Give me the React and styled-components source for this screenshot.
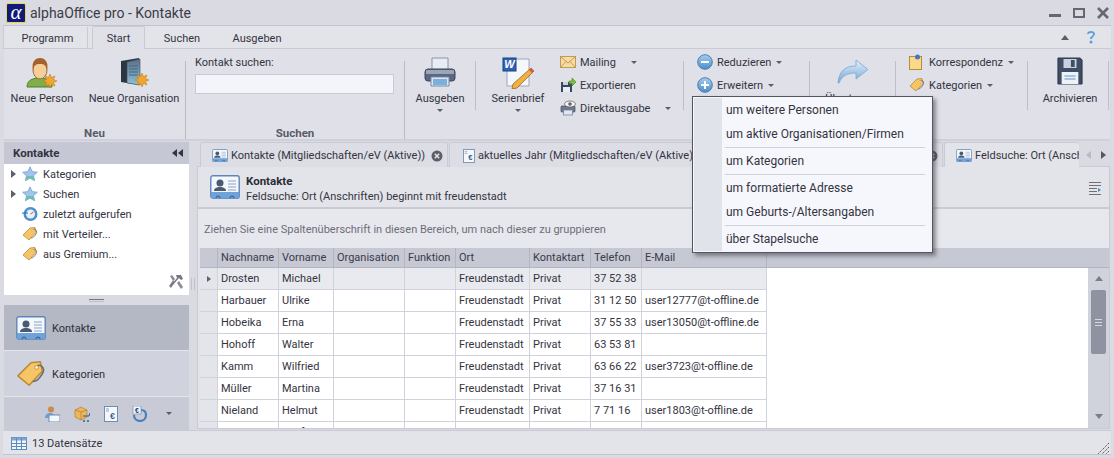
import React from 'react';
import styled, { createGlobalStyle } from 'styled-components';

const GlobalStyle = createGlobalStyle`
  html, body { margin: 0; padding: 0; background: #d9dae2; }
  body { font-family: Roboto, "Noto Sans", sans-serif; font-size: 11px; color: #34343f; }
`;

const Window = styled.div`
  position: relative;
  width: 1114px;
  height: 458px;
  overflow: hidden;
  display: flex;
  flex-direction: column;
  background: #d9dae2;
  box-sizing: border-box;
`;

/* title bar */
const TitleBar = styled.div`
  height: 25px;
  display: flex;
  align-items: center;
  padding: 0 5px 0 6px;
  flex: none;
`;
const Logo = styled.div`
  width: 20px;
  height: 20px;
  background: #101a78;
  border-radius: 2px;
  border: 1px solid #e6d94a;
  box-sizing: border-box;
  color: #fff;
  font: italic 21px/17px "Liberation Serif", serif;
  text-align: center;
  margin-right: 4px;
`;
const Title = styled.div`
  font-size: 14px;
  color: #3c3c46;
  flex: 1;
`;
const WinButtons = styled.div`
  display: flex;
  gap: 12px;
  align-items: center;
`;

/* ribbon tabs */
const TabStrip = styled.div`
  height: 24px;
  flex: none;
  margin: 0 3px;
  background: #e3e4ea;
  border-top: 1px solid #c3c4cf;
  border-bottom: 1px solid #c9cad4;
  border-left: 1px solid #c9cad4;
  display: flex;
  align-items: flex-end;
  box-sizing: border-box;
`;
const RibbonTab = styled.div`
  height: ${p => (p.$active ? '23px' : '22px')};
  width: ${p => p.$w}px;
  display: flex;
  align-items: center;
  justify-content: center;
  box-sizing: border-box;
  margin-bottom: -1px;
  ${p => p.$active && `
    background: #dfe0e8;
    border: 1px solid #c9cad4;
    border-bottom: none;
    border-radius: 2px 2px 0 0;
    margin-left: 4px;
  `}
  ${p => p.$sep && `
    border-right: 1px solid #c9cad4;
    padding-left: 4px;
  `}
`;
const StripEnd = styled.div`
  flex: 1;
  display: flex;
  justify-content: flex-end;
  align-items: center;
  gap: 17px;
  height: 22px;
  padding-right: 15px;
`;

/* ribbon body */
const Ribbon = styled.div`
  height: 92px;
  flex: none;
  margin: 0 4px;
  background: #dfe0e8;
  display: flex;
  border-bottom: 2px solid #cfd0da;
  box-sizing: border-box;
`;
const Group = styled.div`
  width: ${p => p.$w}px;
  flex: ${p => (p.$grow ? 1 : 'none')};
  display: flex;
  flex-direction: column;
  box-sizing: border-box;
  border-right: ${p => (p.$sep ? '1px solid #b9bac4' : 'none')};
  margin-top: 12px;
`;
const GroupBody = styled.div`
  flex: 1;
  display: flex;
  margin-top: -12px;
`;
const GroupLabel = styled.div`
  height: 16px;
  flex: none;
  text-align: center;
  font-weight: 700;
  font-size: 11.5px;
  line-height: 20px;
  color: #5a5b68;
`;
const LargeButton = styled.div`
  width: ${p => p.$w}px;
  margin-left: ${p => p.$ml || 0}px;
  flex: none;
  display: flex;
  flex-direction: column;
  align-items: center;
  padding-top: 5px;
  white-space: nowrap;
`;
const LargeIcon = styled.div`
  height: 32px;
  width: 32px;
  margin-top: 3px;
  display: flex;
  justify-content: center;
`;
const LargeLabel = styled.div`
  line-height: 16px;
  margin-top: 2px;
`;
const Caret = styled.span`
  width: 0;
  height: 0;
  display: inline-block;
  border-left: 3px solid transparent;
  border-right: 3px solid transparent;
  border-top: 3px solid #5c5c68;
  margin-left: ${p => p.$ml || 0}px;
  flex: none;
`;
const LargeCaret = styled(Caret)`
  margin-top: 2px;
`;
const InnerSep = styled.div`
  width: 1px;
  height: 49px;
  margin-top: 12px;
  background: #bdbec8;
  flex: none;
  margin-left: ${p => p.$ml || 0}px;
`;
const SmallColumn = styled.div`
  width: ${p => p.$w}px;
  margin-left: ${p => p.$ml || 0}px;
  flex: none;
  display: flex;
  flex-direction: column;
  padding-top: 2px;
`;
const SmallItem = styled.div`
  height: 23px;
  display: flex;
  align-items: center;
  white-space: nowrap;
  svg { flex: none; margin-right: 4px; margin-top: -1px; }
`;
const SearchBox = styled.div`
  margin-left: 9px;
  width: 199px;
  padding-top: 6px;
  line-height: 15px;
`;
const SearchInput = styled.div`
  height: 20px;
  margin-top: 4px;
  background: #f4f5fb;
  border: 1px solid #c9cad4;
  box-sizing: border-box;
`;

/* main area */
const Main = styled.div`
  flex: 1;
  min-height: 0;
  display: flex;
  margin: 0 4px;
  overflow: hidden;
`;
const Sidebar = styled.div`
  width: 185px;
  flex: none;
  display: flex;
  flex-direction: column;
`;
const SideHeader = styled.div`
  height: 22px;
  margin-top: 1px;
  flex: none;
  background: #c5c8d4;
  font-weight: 700;
  font-size: 11.5px;
  color: #34343f;
  display: flex;
  align-items: center;
  justify-content: space-between;
  padding: 0 6px 0 9px;
`;
const Tree = styled.div`
  height: 131px;
  flex: none;
  background: #fff;
  position: relative;
`;
const TreeRow = styled.div`
  height: 20px;
  display: flex;
  align-items: center;
  padding-left: 7px;
  svg { flex: none; }
`;
const TreeArrow = styled.span`
  width: 0;
  height: 0;
  border-top: 4px solid transparent;
  border-bottom: 4px solid transparent;
  border-left: 5px solid ${p => (p.$hidden ? 'transparent' : '#5f6068')};
  margin-right: 6px;
  flex: none;
`;
const TreeLabel = styled.span`
  margin-left: 5px;
`;
const ToolsCorner = styled.div`
  position: absolute;
  right: 5px;
  bottom: 5px;
  height: 16px;
`;
const SideSplitter = styled.div`
  height: 10px;
  flex: none;
  display: flex;
  justify-content: center;
  padding-top: 4px;
  box-sizing: border-box;
  &::after {
    content: '';
    width: 15px;
    height: 1px;
    border-top: 1px solid #77787f;
    border-bottom: 1px solid #c0c1ca;
  }
`;
const NavButton = styled.div`
  height: ${p => p.$h}px;
  flex: none;
  display: flex;
  align-items: center;
  background: ${p => (p.$active ? '#b3b8c4' : '#d0d3dd')};
  border-bottom: 1px solid #e5e6ec;
  padding-left: 12px;
  box-sizing: border-box;
  span { margin: 2px 0 0 6px; color: #2e2f3a; }
`;
const NavFooter = styled.div`
  flex: 1;
  background: #c8cbd6;
  display: flex;
  align-items: center;
  padding-left: 40px;
  gap: 14px;
`;
const MainSplitter = styled.div`
  width: 8px;
  flex: none;
  display: flex;
  align-items: center;
  justify-content: center;
  &::after {
    content: '';
    width: 2px;
    height: 12px;
    margin-bottom: 4px;
    border-left: 1px solid #c0c1ca;
    border-right: 1px solid #c0c1ca;
  }
`;
const Content = styled.div`
  flex: 1;
  min-width: 0;
  display: flex;
  flex-direction: column;
`;
const DocTabs = styled.div`
  height: 26px;
  flex: none;
  display: flex;
  align-items: flex-end;
  padding-left: 3px;
  position: relative;
  z-index: 1;
  margin-bottom: -1px;
`;
const DocTab = styled.div`
  width: ${p => p.$w}px;
  height: 25px;
  flex: none;
  box-sizing: border-box;
  margin-right: 1px;
  display: flex;
  align-items: center;
  padding: 1px ${p => (p.$clip ? 0 : 2)}px 0 ${p => p.$pl || 11}px;
  border: 1px solid #c9cad4;
  border-bottom: ${p => (p.$clip ? '1px solid #e3e4ea' : 'none')};
  border-right: ${p => (p.$clip ? 'none' : '1px solid #c9cad4')};
  border-radius: 2px 2px 0 0;
  background: ${p => (p.$active ? '#e3e4ea' : '#dcdde5')};
  white-space: nowrap;
  overflow: hidden;
  svg { flex: none; }
  span { margin-left: 3px; }
`;
const DocClose = styled.div`
  margin-left: auto;
  margin-right: 2px;
  display: flex;
`;
const TabArrows = styled.div`
  flex: 1;
  display: flex;
  justify-content: space-between;
  align-items: center;
  height: 25px;
  padding: 0 4px 0 6px;
`;
const TabArrow = styled.span`
  width: 0;
  height: 0;
  border-top: 4px solid transparent;
  border-bottom: 4px solid transparent;
  ${p => (p.$left ? 'border-right: 5px solid #b9bac4;' : 'border-left: 5px solid #55565f;')}
`;
const Panel = styled.div`
  flex: 1;
  min-height: 0;
  background: #e3e4ea;
  border: 1px solid #c9cad4;
  margin-bottom: 1px;
  display: flex;
  flex-direction: column;
`;
const CardHeader = styled.div`
  height: 40px;
  flex: none;
  display: flex;
  align-items: center;
  padding: 0 8px 0 12px;
  border-bottom: 2px solid #c9cad4;
`;
const CardText = styled.div`
  margin-left: 6px;
  padding-top: 3px;
  flex: 1;
  line-height: 16px;
  strong { display: block; font-weight: 700; font-size: 11.5px; color: #2c2c36; }
`;
const PanelMenuWrap = styled.div`
  display: flex;
  margin-top: 3px;
`;
const GroupHint = styled.div`
  height: 39px;
  flex: none;
  display: flex;
  align-items: center;
  padding: 1px 0 0 6px;
  box-sizing: border-box;
  color: #6d6d7b;
  background: #e7e8ed;
`;
const HeaderRow = styled.div`
  height: 19px;
  flex: none;
  background: #c6c8d4;
  border-bottom: 1px solid #b2b4c0;
  display: grid;
  grid-template-columns: 18px 61px 55px 71px 51px 74px 61px 51px 125px;
  margin-left: 2px;
`;
const HeadCell = styled.div`
  border-right: 1px solid #b3b5c2;
  padding-left: 3px;
  line-height: 19px;
  white-space: nowrap;
  overflow: hidden;
  color: #3a3a48;
`;
const GridBody = styled.div`
  flex: 1;
  min-height: 0;
  display: flex;
  overflow: hidden;
  margin-left: 2px;
  background: #fff;
`;
const Rows = styled.div`
  width: 567px;
  flex: none;
`;
const DataRow = styled.div`
  height: 22px;
  display: grid;
  grid-template-columns: 18px 61px 55px 71px 51px 74px 61px 51px 125px;
  box-sizing: border-box;
  border-bottom: 1px solid #d0d2dc;
  background: ${p => (p.$selected ? '#e9eaf0' : '#fff')};
`;
const Indicator = styled.div`
  background: #e4e5eb;
  border-right: 1px solid #d0d2dc;
  display: flex;
  align-items: center;
  justify-content: center;
`;
const RowArrow = styled.span`
  width: 0;
  height: 0;
  border-top: 3px solid transparent;
  border-bottom: 3px solid transparent;
  border-left: 4px solid #5f6068;
`;
const Cell = styled.div`
  border-right: 1px solid #d0d2dc;
  padding-left: 3px;
  line-height: 22px;
  white-space: nowrap;
  overflow: hidden;
  color: #34343f;
`;
const Blank = styled.div`
  flex: 1;
`;
const ScrollBar = styled.div`
  width: 21px;
  flex: none;
  background: #d0d2dc;
  display: flex;
  flex-direction: column;
  align-items: center;
  padding-top: 8px;
`;
const ScrollUp = styled.span`
  width: 0;
  height: 0;
  border-left: 4px solid transparent;
  border-right: 4px solid transparent;
  border-bottom: 5px solid #7b7c8a;
`;
const ScrollDown = styled.span`
  width: 0;
  height: 0;
  border-left: 4px solid transparent;
  border-right: 4px solid transparent;
  border-top: 5px solid #7b7c8a;
  margin-top: auto;
  margin-bottom: 9px;
`;
const Thumb = styled.div`
  width: 15px;
  height: 64px;
  margin-top: 9px;
  background: #8f92a0;
  border-radius: 2px;
  display: flex;
  align-items: center;
  justify-content: center;
  &::after {
    content: '';
    width: 7px;
    height: 5px;
    border-top: 1px solid #d8d9e0;
    border-bottom: 1px solid #d8d9e0;
    background: linear-gradient(#8f92a0 2px, #d8d9e0 2px, #d8d9e0 3px, #8f92a0 3px);
  }
`;

/* status bar */
const StatusBar = styled.div`
  height: 25px;
  flex: none;
  margin: 0 3px 3px;
  background: #e3e4ea;
  border-top: 1px solid #c9cad4;
  border-bottom: 1px solid #c3c4cf;
  box-sizing: border-box;
  display: flex;
  align-items: center;
  padding: 2px 2px 0 8px;
  span { margin-left: 5px; }
`;
const Grip = styled.div`
  margin-left: auto;
  align-self: flex-end;
  display: flex;
`;

/* dropdown */
const Menu = styled.div`
  position: absolute;
  left: 692px;
  top: 96px;
  width: 241px;
  height: 157px;
  box-sizing: border-box;
  background: #f6f7fc;
  border: 1px solid #54555f;
  box-shadow: 3px 3px 4px rgba(60, 60, 70, 0.55);
  padding: 1px;
  z-index: 5;
  &::before {
    content: '';
    position: absolute;
    left: 1px;
    top: 1px;
    bottom: 1px;
    width: 28px;
    background: #e1e3ea;
  }
`;
const MenuItem = styled.div`
  height: 24px;
  line-height: 25px;
  padding-left: 32px;
  font-size: 12px;
  color: #34343f;
  position: relative;
`;
const MenuSep = styled.div`
  height: 1px;
  margin: 1px 6px 1px 31px;
  background: #cfd0da;
  position: relative;
`;

/* drawn icons */
const Burst = ({ x, y }) => (
  <path transform={`translate(${x} ${y})`} d="M0-7l1.500 3.500 3.500-1.500-1.500 3.500L7 0 3.500 1.500 5 5 1.500 3.500 0 7-1.500 3.500-5 5-3.500 1.500-7 0-3.500-1.500-5-5-1.500-3.500z" fill="#f0a52e" stroke="#b9761a" strokeWidth=".5" />
);
const Person = () => (
  <svg width="32" height="32" viewBox="0 0 32 32">
    <path d="M1 30c0-7 6-9 13-9s12 3 12 9z" fill="#7fae4a" stroke="#4f7f2a" />
    <ellipse cx="14" cy="13" rx="7" ry="9" fill="#f6cf98" stroke="#9a6a36" />
    <path d="M7 13C5 4 10 1 14 1s9 3 7 12c-1-5-3-6-7-6s-6 1-7 6z" fill="#a5622c" />
    <Burst x={24} y={24} />
  </svg>
);
const Server = () => (
  <svg width="32" height="32" viewBox="0 0 32 32">
    <defs>
      <linearGradient id="srv" x1="0" y1="0" x2="0" y2="1">
        <stop offset="0" stopColor="#5b7084" />
        <stop offset="1" stopColor="#8fc0d8" />
      </linearGradient>
    </defs>
    <path d="M3 4l18-3v27l-18-3z" fill="#2c3642" />
    <path d="M9 5l13-3v26l-13-2z" fill="url(#srv)" stroke="#3f4c5a" strokeWidth=".6" />
    <path d="M11 9h9M11 12h9M11 15h9M11 18h9" stroke="#3f6684" />
    <Burst x={24} y={23} />
  </svg>
);
const Printer = () => (
  <svg width="32" height="32" viewBox="0 0 32 32">
    <path d="M8 1h16v12H8z" fill="#e8ecf4" stroke="#8a94a8" />
    <rect x="1" y="12" width="30" height="12" rx="3" fill="#59677f" stroke="#3d4759" />
    <path d="M2 13h28v4H2z" fill="#9aa6ba" />
    <path d="M7 20h18v9H7z" fill="#dbe4f0" stroke="#7b8aa2" />
    <path d="M9 22h14v6H9z" fill="#7ab0de" />
  </svg>
);
const Word = () => (
  <svg width="32" height="32" viewBox="0 0 32 32">
    <path d="M5 2h22v27H5z" fill="#f4f7fc" stroke="#9aa7bf" />
    <rect x="1" y="1" width="13" height="13" fill="#2f62b4" stroke="#1d3f80" />
    <text x="7.500" y="11" fontSize="11" fontWeight="700" fontStyle="italic" fill="#fff" textAnchor="middle" fontFamily="Liberation Sans">W</text>
    <path d="M29 11l3 3-17 17-5 1 1-5z" fill="#f2b13e" stroke="#8a5a1a" strokeWidth=".7" />
    <path d="M29 11l3 3-2 2-3-3z" fill="#e0574a" />
  </svg>
);
const Mail = () => (
  <svg width="16" height="16" viewBox="0 0 16 16">
    <rect x=".5" y="2.500" width="15" height="11" fill="#f5dca3" stroke="#c39a52" />
    <path d="M1 3l7 6 7-6M1 13l5-5.500M15 13l-5-5.500" fill="none" stroke="#c39a52" />
  </svg>
);
const Disk = () => (
  <svg width="16" height="16" viewBox="0 0 16 16">
    <path d="M1 5h9l2 2v8H1z" fill="#3a465a" />
    <rect x="3" y="5" width="5" height="3" fill="#c7d0dc" />
    <rect x="3" y="10" width="7" height="5" fill="#e7edf5" />
    <path d="M9 4h3V1l4 4-4 4V6.500H9z" fill="#7cc242" stroke="#3f7f1d" strokeWidth=".6" />
  </svg>
);
const DirectPrint = () => (
  <svg width="16" height="16" viewBox="0 0 16 16">
    <rect x="1" y="6" width="14" height="6" rx="1" fill="#6d7a92" stroke="#3d4759" strokeWidth=".7" />
    <rect x="3.500" y="10" width="9" height="5" fill="#dde6f2" stroke="#6d7a92" strokeWidth=".7" />
    <ellipse cx="10" cy="4" rx="5.500" ry="3" fill="#f0f2f6" stroke="#7a5a3a" strokeWidth=".7" />
    <circle cx="10" cy="4" r="1.800" fill="#4a6a8a" />
  </svg>
);
const Round = ({ plus }) => (
  <svg width="16" height="16" viewBox="0 0 16 16">
    <defs>
      <linearGradient id={plus ? 'rp' : 'rm'} x1="0" y1="0" x2="0" y2="1">
        <stop offset="0" stopColor="#a9cdee" />
        <stop offset="1" stopColor="#4c8cc8" />
      </linearGradient>
    </defs>
    <circle cx="8" cy="8" r="7.300" fill={`url(#${plus ? 'rp' : 'rm'})`} stroke="#4a7fb2" />
    {plus ? <path d="M7 4h2v3h3v2H9v3H7V9H4V7h3z" fill="#fff" /> : <rect x="4" y="7" width="8" height="2" fill="#fff" />}
  </svg>
);
const Transfer = () => (
  <svg width="32" height="32" viewBox="0 0 32 32">
    <defs>
      <linearGradient id="tr" x1="0" y1="0" x2="0" y2="1">
        <stop offset="0" stopColor="#e2eefa" />
        <stop offset="1" stopColor="#74a8da" />
      </linearGradient>
    </defs>
    <path d="M1 26C2 14 8 9 19 9V3l12 9.500L19 22v-6C10 16 5 19 2 26z" fill="url(#tr)" stroke="#7ea6cf" strokeWidth=".8" />
  </svg>
);
const Note = () => (
  <svg width="16" height="16" viewBox="0 0 16 16">
    <rect x=".5" y="2.500" width="12" height="13" fill="#fbd98a" stroke="#b98a3a" />
    <circle cx="8.500" cy="3" r="2.500" fill="#3f77c0" />
  </svg>
);
const Tag = ({ size = 16 }) => (
  <svg width={size} height={size} viewBox="0 0 16 16">
    <path d="M1 9l7-7 5-.500 1 5-7 7.500z" fill="#f6c566" stroke="#bb8a32" strokeWidth=".8" strokeLinejoin="round" />
    <path d="M11 4c2 -2 5 1 3 4s-3 4-5 4" fill="none" stroke="#6b6b70" strokeWidth=".8" />
    <circle cx="11" cy="4.500" r="1" fill="#fff" stroke="#bb8a32" strokeWidth=".5" />
  </svg>
);
const Floppy = () => (
  <svg width="26" height="28" viewBox="0 0 28 28" preserveAspectRatio="none">
    <path d="M1 1h24l2 2v24H1z" fill="#3f4d66" stroke="#2a3447" />
    <rect x="7" y="2" width="14" height="9" fill="#c9d1de" />
    <rect x="15" y="3" width="4" height="7" fill="#3f4d66" />
    <rect x="5" y="15" width="18" height="12" fill="#edf2f8" />
    <path d="M8 19h12M8 22h12" stroke="#8eb4dc" strokeWidth="1.500" />
  </svg>
);
const Star = () => (
  <svg width="16" height="16" viewBox="0 0 16 16">
    <path d="M8 .800l2.200 4.800 5.200.6-3.900 3.500 1.100 5.100L8 12.200l-4.600 2.600 1.100-5.100L.6 6.200l5.200-.6z" fill="#9fc5e8" stroke="#6d9cc8" strokeWidth=".7" />
    <path d="M4.500 10h7l1 4-4.500-2-4.500 2z" fill="#6bbfb4" />
  </svg>
);
const Clock = () => (
  <svg width="16" height="16" viewBox="0 0 16 16">
    <circle cx="8.500" cy="8" r="7" fill="#4b90cc" />
    <circle cx="8.500" cy="8" r="4.500" fill="#e8f0f8" />
    <path d="M8.500 8l3-2" stroke="#c7574a" strokeWidth="1" />
    <path d="M0 7h6" stroke="#2f6ca8" strokeWidth="1" />
  </svg>
);
const Card = ({ w = 16, h = 13 }) => (
  <svg width={w} height={h} viewBox="0 0 30 24">
    <rect x=".8" y=".8" width="28.400" height="22.400" rx="2" fill="#f4f7fc" stroke="#5c86b8" strokeWidth="1.400" />
    <path d="M1 17h28v5a1.500 1.500 0 0 1-1.500 1.500h-25A1.500 1.500 0 0 1 1 22z" fill="#6ea2d8" />
    <circle cx="10" cy="8" r="3.500" fill="#4a5a70" />
    <path d="M4 16c0-3 3-4 6-4s6 1 6 4z" fill="#4a5a70" />
    <path d="M18 6h8M18 9h8M18 12h8M18 15h8" stroke="#8ba3c4" />
    <path d="M6 23a2 2 0 0 1 4 0M20 23a2 2 0 0 1 4 0" fill="none" stroke="#34577f" />
  </svg>
);
const EuroDoc = ({ w = 14 }) => (
  <svg width={w} height="16" viewBox="0 0 14 16">
    <rect x=".5" y=".5" width="13" height="15" fill="#f4f7fc" stroke="#6f8cb4" />
    <path d="M2 3h3M2 5h3" stroke="#8ba3c4" />
    <text x="8.500" y="13" fontSize="9" fontWeight="700" fill="#3f5f8c" textAnchor="middle" fontFamily="Liberation Sans">€</text>
  </svg>
);
const CloseDot = () => (
  <svg width="12" height="12" viewBox="0 0 12 12">
    <circle cx="6" cy="6" r="5.500" fill="#5d5e68" />
    <path d="M3.800 3.800l4.400 4.400M8.200 3.800l-4.400 4.400" stroke="#e3e4ea" strokeWidth="1.500" />
  </svg>
);
const Tools = () => (
  <svg width="16" height="16" viewBox="0 0 16 16">
    <path d="M2 2l2-1 3 4-2 2zM5 6l2 2-4 6-2-2z" fill="#8b8c94" />
    <path d="M8 1h5l2 4-2 1-2-2-8 9-1-1 7-8z" fill="#77787f" />
    <path d="M9 9l2-2 4 6-2 2z" fill="#8b8c94" />
  </svg>
);
const PersonNum = () => (
  <svg width="16" height="16" viewBox="0 0 16 16">
    <circle cx="7" cy="3.500" r="3" fill="#c98a4a" />
    <path d="M1 12c0-4 3-5 5-5s4 1 4 3v2z" fill="#6e9ed4" />
    <rect x="5" y="9" width="11" height="7" fill="#f4f7fc" stroke="#6f8cb4" />
  </svg>
);
const BoxCart = () => (
  <svg width="16" height="16" viewBox="0 0 16 16">
    <path d="M1 4l6-3 6 3v7l-6 3-6-3z" fill="#eeb55a" stroke="#a8762a" strokeWidth=".6" />
    <path d="M7 6v8M1 4l6 2 6-2" fill="none" stroke="#a8762a" strokeWidth=".6" />
    <circle cx="10" cy="15" r="1" fill="#2f5c94" />
    <circle cx="14" cy="15" r="1" fill="#2f5c94" />
    <path d="M9 10h6l1-3" fill="none" stroke="#2f5c94" />
  </svg>
);
const EuroCycle = () => (
  <svg width="16" height="16" viewBox="0 0 16 16">
    <path d="M2 9c0 4 3 6 6 6s6-2 6-6-3-5-5-5" fill="none" stroke="#4b7fba" strokeWidth="2.200" />
    <rect x="1" y="0" width="8" height="8" fill="#f4f7fc" stroke="#6f8cb4" strokeWidth=".7" />
    <text x="5" y="7" fontSize="7" fontWeight="700" fill="#23456f" textAnchor="middle" fontFamily="Liberation Sans">€</text>
  </svg>
);
const TableIcon = () => (
  <svg width="16" height="13" viewBox="0 0 16 13">
    <rect x=".5" y=".5" width="15" height="12" fill="#f2f6fb" stroke="#5a8ac0" />
    <rect x=".5" y=".5" width="15" height="3" fill="#7ba7d8" />
    <path d="M5.500 1v11M10.500 1v11M1 6.500h14M1 9.500h14" stroke="#5a8ac0" />
  </svg>
);
const Help = () => (
  <svg width="10" height="14" viewBox="0 0 10 14">
    <path d="M1 4c0-2 2-3 4-3s4 1 4 3-3 3-3 5H4c0-3 3-3 3-5 0-1-1-1-2-1S3 3 3 4z" fill="#5f9edb" />
    <circle cx="5" cy="12" r="1.500" fill="#5f9edb" />
  </svg>
);
const CollapseArrows = () => (
  <svg width="11" height="8" viewBox="0 0 11 8">
    <path d="M5 0v8L0 4zM11 0v8L6 4z" fill="#34343f" />
  </svg>
);
const Minimize = () => (
  <svg width="12" height="12" viewBox="0 0 12 12"><rect y="7" width="12" height="3" fill="#666772" /></svg>
);
const Maximize = () => (
  <svg width="12" height="12" viewBox="0 0 12 12"><path d="M1 2h10v8H1z" fill="none" stroke="#666772" strokeWidth="2" /></svg>
);
const CloseX = () => (
  <svg width="12" height="12" viewBox="0 0 12 12"><path d="M1 1l10 10M11 1L1 11" stroke="#666772" strokeWidth="2.600" /></svg>
);
const CollapseUp = () => (
  <svg width="8" height="5" viewBox="0 0 8 5"><path d="M4 0l4 5H0z" fill="#5c5c68" /></svg>
);
const PanelMenu = () => (
  <svg width="12" height="13" viewBox="0 0 12 13">
    <path d="M0 .500h12M0 3.500h12M0 6.500h8M0 9.500h8M0 12.500h12" stroke="#6f7079" />
    <path d="M9 6l3 2-3 2z" fill="#4f86c0" />
  </svg>
);
const ResizeGrip = () => (
  <svg width="12" height="12" viewBox="0 0 12 12">
    <path d="M12 1L1 12M12 5l-7 7M12 9l-3 3" stroke="#55565f" strokeDasharray="1.500 .8" />
  </svg>
);

const columns = ['Nachname', 'Vorname', 'Organisation', 'Funktion', 'Ort', 'Kontaktart', 'Telefon', 'E-Mail'];
const people = [
  ['Drosten', 'Michael', '37 52 38', ''],
  ['Harbauer', 'Ulrike', '31 12 50', 'user12777@t-offline.de'],
  ['Hobeika', 'Erna', '37 55 33', 'user13050@t-offline.de'],
  ['Hohoff', 'Walter', '63 53 81', ''],
  ['Kamm', 'Wilfried', '63 66 22', 'user3723@t-offline.de'],
  ['Müller', 'Martina', '37 16 31', ''],
  ['Nieland', 'Helmut', '7 71 16', 'user1803@t-offline.de'],
  ['Preller', 'Wolfgang', '54 14 73', ''],
];

const App = () => (
  <Window>
    <GlobalStyle />
    <TitleBar>
      <Logo>α</Logo>
      <Title>alphaOffice pro - Kontakte</Title>
      <WinButtons>
        <Minimize />
        <Maximize />
        <CloseX />
      </WinButtons>
    </TitleBar>

    <TabStrip>
      <RibbonTab $w={84} $sep>Programm</RibbonTab>
      <RibbonTab $w={53} $active>Start</RibbonTab>
      <RibbonTab $w={74}>Suchen</RibbonTab>
      <RibbonTab $w={76}>Ausgeben</RibbonTab>
      <StripEnd>
        <CollapseUp />
        <Help />
      </StripEnd>
    </TabStrip>

    <Ribbon>
      <Group $w={182} $sep>
        <GroupBody>
          <LargeButton $w={76}>
            <LargeIcon><Person /></LargeIcon>
            <LargeLabel>Neue Person</LargeLabel>
          </LargeButton>
          <LargeButton $w={96} $ml={6}>
            <LargeIcon><Server /></LargeIcon>
            <LargeLabel>Neue Organisation</LargeLabel>
          </LargeButton>
        </GroupBody>
        <GroupLabel>Neu</GroupLabel>
      </Group>
      <Group $w={219} $sep>
        <GroupBody>
          <SearchBox>
            Kontakt suchen:
            <SearchInput />
          </SearchBox>
        </GroupBody>
        <GroupLabel>Suchen</GroupLabel>
      </Group>
      <Group $grow>
        <GroupBody>
          <LargeButton $w={70}>
            <LargeIcon><Printer /></LargeIcon>
            <LargeLabel>Ausgeben</LargeLabel>
            <LargeCaret />
          </LargeButton>
          <InnerSep />
          <LargeButton $w={84}>
            <LargeIcon><Word /></LargeIcon>
            <LargeLabel>Serienbrief</LargeLabel>
            <LargeCaret />
          </LargeButton>
          <SmallColumn $w={123}>
            <SmallItem><Mail />Mailing<Caret $ml={15} /></SmallItem>
            <SmallItem><Disk />Exportieren</SmallItem>
            <SmallItem><DirectPrint />Direktausgabe<Caret $ml={15} /></SmallItem>
          </SmallColumn>
          <InnerSep />
          <SmallColumn $w={112} $ml={13}>
            <SmallItem><Round />Reduzieren<Caret $ml={5} /></SmallItem>
            <SmallItem><Round plus />Erweitern<Caret $ml={5} /></SmallItem>
          </SmallColumn>
          <InnerSep />
          <LargeButton $w={85}>
            <LargeIcon><Transfer /></LargeIcon>
            <LargeLabel>Übertragen</LargeLabel>
          </LargeButton>
          <InnerSep />
          <SmallColumn $w={118} $ml={13}>
            <SmallItem><Note />Korrespondenz<Caret $ml={5} /></SmallItem>
            <SmallItem><Tag />Kategorien<Caret $ml={5} /></SmallItem>
          </SmallColumn>
          <InnerSep />
          <LargeButton $w={76} $ml={4}>
            <LargeIcon><Floppy /></LargeIcon>
            <LargeLabel>Archivieren</LargeLabel>
          </LargeButton>
          <InnerSep />
        </GroupBody>
      </Group>
    </Ribbon>

    <Main>
      <Sidebar>
        <SideHeader>Kontakte<CollapseArrows /></SideHeader>
        <Tree>
          <TreeRow><TreeArrow /><Star /><TreeLabel>Kategorien</TreeLabel></TreeRow>
          <TreeRow><TreeArrow /><Star /><TreeLabel>Suchen</TreeLabel></TreeRow>
          <TreeRow><TreeArrow $hidden /><Clock /><TreeLabel>zuletzt aufgerufen</TreeLabel></TreeRow>
          <TreeRow><TreeArrow $hidden /><Tag /><TreeLabel>mit Verteiler...</TreeLabel></TreeRow>
          <TreeRow><TreeArrow $hidden /><Tag /><TreeLabel>aus Gremium...</TreeLabel></TreeRow>
          <ToolsCorner><Tools /></ToolsCorner>
        </Tree>
        <SideSplitter />
        <NavButton $h={46} $active><Card w={30} h={24} /><span>Kontakte</span></NavButton>
        <NavButton $h={46}><Tag size={30} /><span>Kategorien</span></NavButton>
        <NavFooter>
          <PersonNum />
          <BoxCart />
          <EuroDoc />
          <EuroCycle />
          <Caret $ml={4} />
        </NavFooter>
      </Sidebar>
      <MainSplitter />
      <Content>
        <DocTabs>
          <DocTab $w={248}>
            <Card />
            <span>Kontakte (Mitgliedschaften/eV (Aktive))</span>
            <DocClose><CloseDot /></DocClose>
          </DocTab>
          <DocTab $w={270} $pl={13}>
            <EuroDoc w={12} />
            <span>aktuelles Jahr (Mitgliedschaften/eV (Aktive))</span>
          </DocTab>
          <DocTab $w={223}>
            <DocClose><CloseDot /></DocClose>
          </DocTab>
          <DocTab $w={135} $active $clip>
            <Card />
            <span>Feldsuche: Ort (Anschriften)</span>
          </DocTab>
          <TabArrows>
            <TabArrow $left />
            <TabArrow />
          </TabArrows>
        </DocTabs>
        <Panel>
          <CardHeader>
            <Card w={30} h={24} />
            <CardText>
              <strong>Kontakte</strong>
              Feldsuche: Ort (Anschriften) beginnt mit freudenstadt
            </CardText>
            <PanelMenuWrap><PanelMenu /></PanelMenuWrap>
          </CardHeader>
          <GroupHint>Ziehen Sie eine Spaltenüberschrift in diesen Bereich, um nach dieser zu gruppieren</GroupHint>
          <HeaderRow>
            <HeadCell />
            {columns.map(c => <HeadCell key={c}>{c}</HeadCell>)}
          </HeaderRow>
          <GridBody>
            <Rows>
              {people.map(([last, first, phone, mail], i) => (
                <DataRow key={last} $selected={i === 0}>
                  <Indicator>{i === 0 && <RowArrow />}</Indicator>
                  <Cell>{last}</Cell>
                  <Cell>{first}</Cell>
                  <Cell />
                  <Cell />
                  <Cell>Freudenstadt</Cell>
                  <Cell>Privat</Cell>
                  <Cell>{phone}</Cell>
                  <Cell>{mail}</Cell>
                </DataRow>
              ))}
            </Rows>
            <Blank />
            <ScrollBar>
              <ScrollUp />
              <Thumb />
              <ScrollDown />
            </ScrollBar>
          </GridBody>
        </Panel>
      </Content>
    </Main>

    <StatusBar>
      <TableIcon />
      <span>13 Datensätze</span>
      <Grip><ResizeGrip /></Grip>
    </StatusBar>

    <Menu>
      <MenuItem>um weitere Personen</MenuItem>
      <MenuItem>um aktive Organisationen/Firmen</MenuItem>
      <MenuSep />
      <MenuItem>um Kategorien</MenuItem>
      <MenuSep />
      <MenuItem>um formatierte Adresse</MenuItem>
      <MenuItem>um Geburts-/Altersangaben</MenuItem>
      <MenuSep />
      <MenuItem>über Stapelsuche</MenuItem>
    </Menu>
  </Window>
);

export default App;
